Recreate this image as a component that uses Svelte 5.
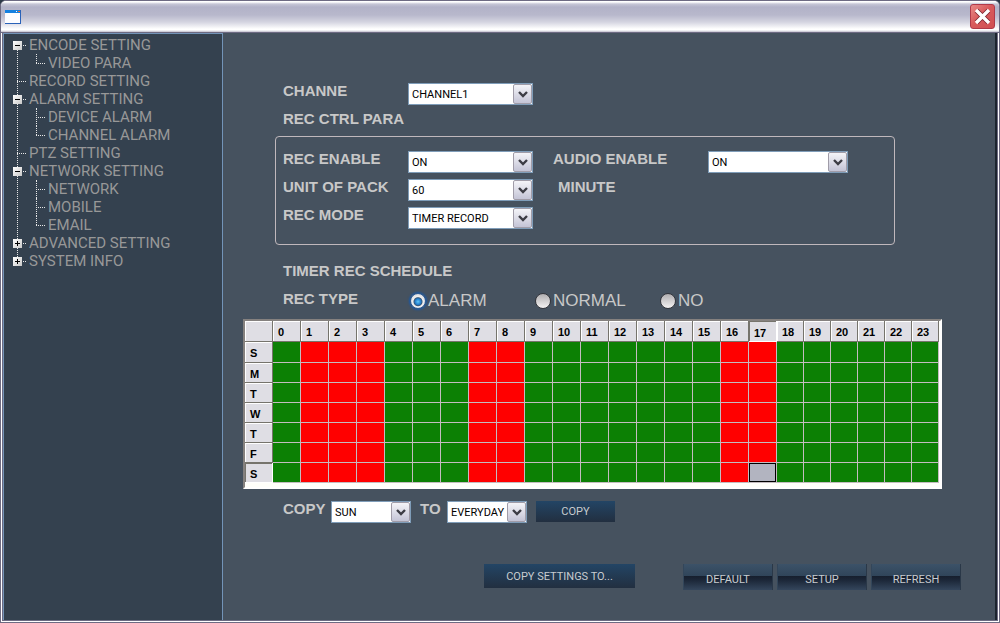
<script>
  const hours = Array.from({ length: 24 }, (_, i) => i)
  const days = [
    { letter: 'S', name: 'Sunday' },
    { letter: 'M', name: 'Monday' },
    { letter: 'T', name: 'Tuesday' },
    { letter: 'W', name: 'Wednesday' },
    { letter: 'T', name: 'Thursday' },
    { letter: 'F', name: 'Friday' },
    { letter: 'S', name: 'Saturday' },
  ]
  const alarmHours = [1, 2, 3, 7, 8, 16, 17]

  let tree = $state([
    { label: 'ENCODE SETTING', open: true, children: ['VIDEO PARA'] },
    { label: 'RECORD SETTING' },
    { label: 'ALARM SETTING', open: true, children: ['DEVICE ALARM', 'CHANNEL ALARM'] },
    { label: 'PTZ SETTING' },
    { label: 'NETWORK SETTING', open: true, children: ['NETWORK', 'MOBILE', 'EMAIL'] },
    { label: 'ADVANCED SETTING', open: false, children: ['USER', 'UPGRADE'] },
    { label: 'SYSTEM INFO', open: false, children: ['VERSION', 'DISK'] },
  ])

  let recType = $state('alarm')
  let schedule = $state(days.map(() => hours.map((h) => (alarmHours.includes(h) ? 'alarm' : 'normal'))))
  let current = $state({ day: 6, hour: 17 })

  function paint(day, hour) {
    schedule[day][hour] = recType
    current = { day, hour }
  }
</script>

{#snippet dropdown(id, options)}
  <span class="dropdown">
    <select {id}>
      {#each options as option}
        <option>{option}</option>
      {/each}
    </select>
    <span class="arrow">
      <svg width="10" height="7" viewBox="0 0 10 7" aria-hidden="true">
        <path d="M1 1 L5 5 L9 1" fill="none" stroke="#3c3c44" stroke-width="2.4" />
      </svg>
    </span>
  </span>
{/snippet}

<div class="window">
  <header class="titlebar">
    <svg width="16" height="14" viewBox="0 0 16 14" aria-hidden="true">
      <rect x="0" y="0" width="16" height="14" fill="#2a62b8" />
      <rect x="0" y="0" width="15" height="3" fill="#1580e0" />
      <rect x="11" y="1" width="1" height="1" fill="#fff" />
      <rect x="13" y="1" width="2" height="1" fill="#e86a30" />
      <rect x="0" y="3" width="15" height="10" fill="#fcfcff" />
    </svg>
    <button class="close" aria-label="Close">
      <svg width="17" height="17" viewBox="0 0 17 17" aria-hidden="true">
        <path d="M2.500 2.500 L14.500 14.500 M14.500 2.500 L2.500 14.500" stroke="#7c2430" stroke-width="5" />
        <path d="M2 2 L15 15 M15 2 L2 15" stroke="#fff" stroke-width="3.400" />
      </svg>
    </button>
  </header>

  <div class="body">
    <nav class="sidebar">
      <ul class="tree">
        {#each tree as node (node.label)}
          <li>
            {#if node.children}
              <button
                class="toggle"
                aria-label={node.open ? 'Collapse' : 'Expand'}
                onclick={() => (node.open = !node.open)}
              >
                <svg width="9" height="9" viewBox="0 0 9 9" aria-hidden="true">
                  <path d={node.open ? 'M2 4.500H7' : 'M2 4.500H7M4.500 2V7'} stroke="#000" />
                </svg>
              </button>
            {/if}
            <a href="#main">{node.label}</a>
            {#if node.children && node.open}
              <ul class="children">
                {#each node.children as child}
                  <li><a href="#main">{child}</a></li>
                {/each}
              </ul>
            {/if}
          </li>
        {/each}
      </ul>
    </nav>

    <main id="main">
      <div class="fields">
        <label for="channel">CHANNE</label>
        {@render dropdown('channel', ['CHANNEL1', 'CHANNEL2', 'CHANNEL3', 'CHANNEL4'])}
      </div>

      <h2 class="group-title">REC CTRL PARA</h2>
      <section class="group">
        <div class="fields">
          <label for="rec-enable">REC ENABLE</label>
          {@render dropdown('rec-enable', ['ON', 'OFF'])}
          <label class="second" for="audio-enable">AUDIO ENABLE</label>
          {@render dropdown('audio-enable', ['ON', 'OFF'])}
          <label for="unit">UNIT OF PACK</label>
          {@render dropdown('unit', ['60', '45', '30', '15'])}
          <span class="unit">MINUTE</span>
          <span></span>
          <label for="mode">REC MODE</label>
          {@render dropdown('mode', ['TIMER RECORD', 'MANUAL RECORD'])}
        </div>
      </section>

      <h2 class="schedule-title">TIMER REC SCHEDULE</h2>
      <div class="types" role="radiogroup" aria-labelledby="type-label">
        <span id="type-label">REC TYPE</span>
        <label><input type="radio" value="alarm" bind:group={recType} />ALARM</label>
        <label><input type="radio" value="normal" bind:group={recType} />NORMAL</label>
        <label><input type="radio" value="no" bind:group={recType} />NO</label>
      </div>

      <div class="schedule">
        <table>
          <colgroup>
            <col class="slot" span="19" />
            <col span="6" />
          </colgroup>
          <thead>
            <tr>
              <th></th>
              {#each hours as hour}
                <th scope="col" class:pressed={current.hour === hour}>{hour}</th>
              {/each}
            </tr>
          </thead>
          <tbody>
            {#each days as day, d}
              <tr>
                <th scope="row" class:pressed={current.day === d}>{day.letter}</th>
                {#each hours as hour}
                  <td>
                    <button
                      class="cell {schedule[d][hour]}"
                      class:current={current.day === d && current.hour === hour}
                      aria-label="{day.name} {hour}:00"
                      onclick={() => paint(d, hour)}
                    ></button>
                  </td>
                {/each}
              </tr>
            {/each}
          </tbody>
        </table>
      </div>

      <div class="copy-row">
        <label for="copy-from">COPY</label>
        {@render dropdown('copy-from', ['SUN', 'MON', 'TUE', 'WED', 'THU', 'FRI', 'SAT'])}
        <label class="to" for="copy-to">TO</label>
        {@render dropdown('copy-to', ['EVERYDAY', 'SUN', 'MON', 'TUE', 'WED', 'THU', 'FRI', 'SAT'])}
        <button class="flat">COPY</button>
      </div>

      <footer>
        <button class="flat wide">COPY SETTINGS TO...</button>
        <button class="glossy">DEFAULT</button>
        <button class="glossy">SETUP</button>
        <button class="glossy">REFRESH</button>
      </footer>
    </main>
  </div>
</div>

<style>
  :global(body) {
    background: #2c3947;
  }

  .window {
    box-sizing: border-box;
    display: flex;
    flex-direction: column;
    min-height: 100vh;
    border: 1px solid #6d6a82;
    border-radius: 6px 6px 0 0;
    overflow: hidden;
    background: #fff;
    font-family: 'Liberation Sans', Arial, sans-serif;
    font-size: 15px;
    color: #c8c8c8;
  }

  button,
  select {
    font-family: Roboto, Tahoma, sans-serif;
    font-size: 11px;
  }

  button {
    padding: 0;
    border: 0;
    cursor: pointer;
  }

  .titlebar {
    box-sizing: border-box;
    display: flex;
    align-items: center;
    justify-content: space-between;
    height: 32px;
    padding: 0 4px;
    border-bottom: 1px solid #6d6a82;
    background: linear-gradient(#fff 0, #fff 1px, #c6c6d6 3px, #b2b2c8 6px, #b8b8cc 14px, #d4d4e0 21px, #fff 28px, #fff 29px, #c0bfcc 31px);
  }

  .close {
    display: grid;
    place-items: center;
    width: 25px;
    height: 25px;
    border: 1px solid #b03a4a;
    border-radius: 3px;
    background: linear-gradient(135deg, #e88a88, #d85a5c 45%, #d05052);
  }

  .body {
    flex: 1;
    display: flex;
    margin: 0 1px 1px;
    border: 1px solid #6d6a82;
    border-top: 0;
  }

  /* Navigation tree */
  .sidebar {
    box-sizing: border-box;
    flex: none;
    width: 220px;
    padding: 2px 9px;
    border: 1px solid #7394b8;
    border-bottom: 0;
    background: #34414f;
  }

  ul {
    margin: 0;
    padding: 0;
    list-style: none;
  }

  .tree li {
    position: relative;
  }

  .tree > li {
    padding-left: 16px;
  }

  .tree a {
    display: block;
    height: 18px;
    font-family: Roboto, Tahoma, sans-serif;
    line-height: 18px;
    color: #989898;
    text-decoration: none;
    white-space: nowrap;
  }

  .tree li::before,
  .tree li::after {
    content: '';
    position: absolute;
  }

  .tree > li::before {
    top: 9px;
    bottom: -9px;
    left: 4px;
    border-left: 1px dotted #e8e8e8;
  }

  .tree > li:last-child::before {
    display: none;
  }

  .tree > li::after {
    top: 9px;
    left: 4px;
    width: 9px;
    border-top: 1px dotted #e8e8e8;
  }

  .toggle {
    position: absolute;
    z-index: 1;
    top: 5px;
    left: 0;
    width: 9px;
    height: 9px;
    background: linear-gradient(135deg, #fff, #c8c8c8);
  }

  .toggle svg {
    display: block;
  }

  .children li {
    padding-left: 19px;
  }

  .children li::before {
    top: 0;
    left: 7px;
    height: 18px;
    border-left: 1px dotted #e8e8e8;
  }

  .children li:last-child::before {
    height: 9px;
  }

  .children li::after {
    top: 9px;
    left: 7px;
    width: 9px;
    border-top: 1px dotted #e8e8e8;
  }

  /* Record form */
  main {
    flex: 1;
    min-width: 0;
    padding: 50px 34px 20px 20px;
    border-right: 2px solid #1c242e;
    background: #46525f;
  }

  h2,
  .fields label,
  .unit,
  #type-label,
  .copy-row label {
    margin: 0;
    font-size: 15px;
    font-weight: bold;
    line-height: 16px;
    white-space: nowrap;
  }

  .fields {
    display: grid;
    grid-template-columns: 125px 125px 175px 140px;
    grid-auto-rows: 22px;
    row-gap: 6px;
    align-items: start;
  }

  main > .fields,
  .group-title,
  .schedule-title {
    margin-left: 40px;
  }

  .second {
    padding-left: 20px;
  }

  .unit {
    padding-left: 25px;
  }

  .group-title {
    margin-top: 6px;
  }

  .group {
    margin: 9px 66px 18px 32px;
    padding: 14px 7px 15px;
    border: 1px solid #c0b8bc;
    border-radius: 4px;
  }

  .dropdown {
    position: relative;
    display: block;
    height: 22px;
  }

  select {
    appearance: none;
    box-sizing: border-box;
    display: block;
    width: 100%;
    height: 22px;
    padding: 0 20px 0 3px;
    border: 1px solid #7f9db9;
    border-radius: 0;
    background: #fff;
    color: #000;
  }

  .arrow {
    position: absolute;
    top: 1px;
    right: 1px;
    bottom: 1px;
    box-sizing: border-box;
    display: grid;
    place-items: center;
    width: 19px;
    border: 1px solid #a09ca8;
    border-radius: 2px;
    background: linear-gradient(#f4f4f8, #c4c4d6);
    pointer-events: none;
  }

  .types {
    display: grid;
    grid-template-columns: repeat(4, 125px);
    height: 20px;
    margin: 12px 0 8px 40px;
  }

  .types label {
    display: flex;
    align-items: center;
    gap: 2px;
    font-size: 17px;
    line-height: 20px;
  }

  input[type='radio'] {
    appearance: none;
    width: 16px;
    height: 16px;
    margin: 0 0 0 2px;
    border: 1px solid #34363c;
    border-radius: 50%;
    background: linear-gradient(#b0aeb0, #f4f2f2);
  }

  input[type='radio']:checked {
    border-color: #2a5c98;
    background: radial-gradient(circle at 50% 55%, #60c8f8 0, #2078c8 3px, #385878 4px, #f0f0f0 5px, #d8d8dc 8px);
    box-shadow: 0 0 2px 1px #1858a8;
  }

  /* Schedule grid */
  .schedule {
    margin-right: 19px;
    padding: 0 1px 4px 0;
    border: 2px solid #fff;
    border-top-color: #85817f;
    border-left-color: #85817f;
    background: #fffffa;
  }

  table {
    width: 100%;
    border-collapse: separate;
    border-spacing: 0;
    table-layout: fixed;
  }

  .slot {
    width: 28px;
  }

  th {
    box-sizing: border-box;
    height: 20px;
    padding: 2px 0 0 5px;
    border-right: 1px solid #76746c;
    border-bottom: 1px solid #76746c;
    background: #dfdee4;
    box-shadow: inset 1px 1px #fff;
    font-size: 11px;
    line-height: 16px;
    text-align: left;
    color: #000;
  }

  thead th {
    height: 21px;
    padding-top: 1px;
  }

  tbody tr:first-child th {
    height: 21px;
  }

  th.pressed {
    padding-top: 3px;
    border-color: #fff;
    box-shadow: inset 1px 1px #76746c;
  }

  td {
    height: 1px;
    padding: 0;
    border-right: 1px solid #c4bcc0;
    border-bottom: 1px solid #c4bcc0;
  }

  .cell {
    display: block;
    width: 100%;
    height: 100%;
    border-radius: 0;
  }

  .cell.normal {
    background: #0c8004;
  }

  .cell.alarm {
    background: #f00;
  }

  .cell.no {
    background: #fff;
  }

  .cell.current {
    border: 1px solid #000;
    background: #b2b4c0;
  }

  /* Actions */
  .copy-row {
    display: grid;
    grid-template-columns: 48px 80px 36px 80px 88px;
    align-items: start;
    margin: 12px 0 0 40px;
  }

  .copy-row .to {
    padding-left: 9px;
  }

  .flat {
    height: 21px;
    margin-left: 9px;
    border-radius: 0;
    background: linear-gradient(#234565, #222f40);
    color: #c8ccd0;
  }

  footer {
    display: flex;
    justify-content: flex-end;
    gap: 4px;
    margin-top: 41px;
  }

  .flat.wide {
    width: 151px;
    height: 24px;
    margin: 0 44px 0 0;
  }

  .glossy {
    width: 90px;
    height: 26px;
    padding-top: 4px;
    border-right: 1px solid #2a3848;
    border-left: 1px solid #33465a;
    border-radius: 0;
    background: linear-gradient(#3c5268 0, #30455a 46%, #161f2e 47%, #1c2738 62%, #34465c 100%);
    color: #c8ccd0;
  }
</style>
